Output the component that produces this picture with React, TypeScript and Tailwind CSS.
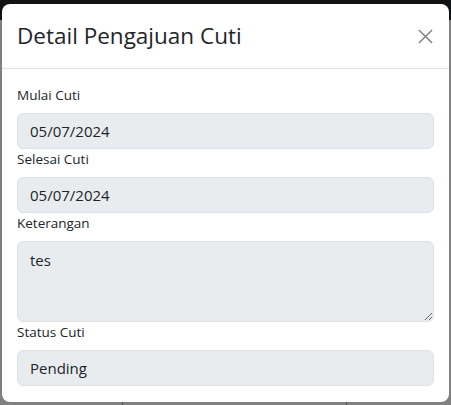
import React from 'react';

const font = { fontFamily: '"Segoe UI", "Open Sans", "Noto Sans", sans-serif' };

function Field({ label, value, tall }: { label: string; value: string; tall?: boolean }) {
  return (
    <div>
      <label className="block text-[13.5px] leading-[21px] text-[#212529] mb-[7px]">{label}</label>
      {tall ? (
        <textarea
          disabled
          value={value}
          readOnly
          className="block w-full h-[81px] rounded-[6px] border border-[#dee2e6] bg-[#e9ecef] px-[12px] py-[6px] text-[15px] leading-[24px] text-[#212529] resize-y"
          style={font}
        />
      ) : (
        <div className="flex items-center h-[36px] rounded-[6px] border border-[#dee2e6] bg-[#e9ecef] px-[12px] text-[15px] text-[#212529]">
          {value}
        </div>
      )}
    </div>
  );
}

export default function App() {
  return (
    <div className="relative h-[405px] w-[451px] overflow-hidden bg-[#808080]" style={font}>
      {/* page behind the backdrop */}
      <div className="absolute inset-x-0 top-0 h-[20px] bg-[#111214]" />
      <div className="absolute left-0 right-0 top-[399px] h-[6px] flex text-[14px] leading-[20px] text-[#111]">
        <div className="w-[123px] border-r border-[#555]" />
        <div className="w-[224px] border-r border-[#555]" />
      </div>

      <div className="relative z-10 pt-[4px] px-[2px]">
        <div className="h-[398px] rounded-[8px] bg-white overflow-hidden">
          <div className="flex items-center justify-between h-[65px] px-[15px] border-b border-[#dee2e6]">
            <h5 className="text-[22.5px] font-medium text-[#212529] leading-none">Detail Pengajuan Cuti</h5>
            <button className="w-[20px] h-[20px] flex items-center justify-center opacity-50 mr-[-1px]">
              <svg width="15" height="15" viewBox="0 0 16 16" fill="none" stroke="#000" strokeWidth="1.5">
                <path d="M1 1L15 15M15 1L1 15" />
              </svg>
            </button>
          </div>
          <div className="flex flex-col px-[15px] pt-[16px]">
            <Field label="Mulai Cuti" value="05/07/2024" />
            <Field label="Selesai Cuti" value="05/07/2024" />
            <Field label="Keterangan" value="tes" tall />
            <Field label="Status Cuti" value="Pending" />
          </div>
        </div>
      </div>
    </div>
  );
}
